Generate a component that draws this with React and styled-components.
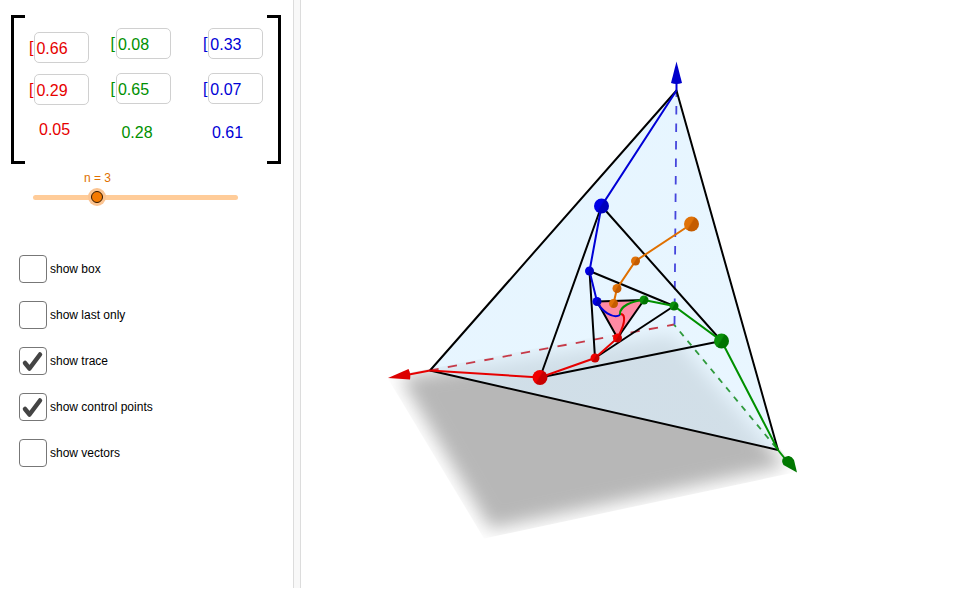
import React, { useState } from 'react';
import styled, { createGlobalStyle } from 'styled-components';

const RED = '#e60000';
const GREEN = '#009000';
const BLUE = '#0000d6';
const ORANGE = '#e07000';

const columns = [
    { name: 'red', color: RED, values: ['0.66', '0.29'], last: '0.05', top: 17, left: 15, gap: 11, lastGap: 16, indent: 10 },
    { name: 'green', color: GREEN, values: ['0.08', '0.65'], last: '0.28', top: 13, left: 21, gap: 14, lastGap: 20, indent: 11 },
    { name: 'blue', color: BLUE, values: ['0.33', '0.07'], last: '0.61', top: 13, left: 32, gap: 14, lastGap: 20, indent: 9 },
];

const options = [
    { id: 'box', label: 'show box', on: false },
    { id: 'last', label: 'show last only', on: false },
    { id: 'trace', label: 'show trace', on: true },
    { id: 'control', label: 'show control points', on: true },
    { id: 'vectors', label: 'show vectors', on: false },
];

const MatrixColumn = ({ column }) => {
    const [values, setValues] = useState(column.values);

    const handleChange = (index, value) => {
        setValues(values.map((v, i) => (i === index ? value : v)));
    }

    return (
        <Column $color={column.color} $top={column.top} $left={column.left} $gap={column.gap}>
            {values.map((value, i) => (
                <Entry key={i}>
                    [
                    <EntryInput
                        type="text"
                        aria-label={`${column.name} ${i + 1}`}
                        value={value}
                        onChange={(e) => handleChange(i, e.target.value)}
                    />
                </Entry>
            ))}
            <LastEntry $gap={column.lastGap - column.gap} $indent={column.indent}>{column.last}</LastEntry>
        </Column>
    );
}

const Ball = ({ x, y, r, kind }) => <circle cx={x} cy={y} r={r} fill={`url(#${kind})`} />;

const Scene = () => (
    <Canvas viewBox="301 0 659 588" role="img" aria-label="Nested triangles in 3D">
        <defs>
            <filter id="soft" x="-20%" y="-20%" width="140%" height="140%">
                <feGaussianBlur stdDeviation="9" />
            </filter>
            <clipPath id="floor">
                <path d="M387 377 L484 538.5 L799 471.5 L674 322 Z" />
            </clipPath>
            <linearGradient id="face" x1="0" y1="0" x2="1" y2="1">
                <stop offset="0" stopColor="#d9f0ff" />
                <stop offset="1" stopColor="#dff2ff" />
            </linearGradient>
            <linearGradient id="redBall" x1="0" y1="0" x2="1" y2="0.6">
                <stop offset="0.5" stopColor="#f00000" />
                <stop offset="0.6" stopColor="#c80000" />
            </linearGradient>
            <linearGradient id="greenBall" x1="0" y1="0" x2="1" y2="0.6">
                <stop offset="0.5" stopColor="#0a900a" />
                <stop offset="0.6" stopColor="#007400" />
            </linearGradient>
            <linearGradient id="blueBall" x1="0" y1="0" x2="1" y2="0.6">
                <stop offset="0.5" stopColor="#0000e6" />
                <stop offset="0.6" stopColor="#0000bc" />
            </linearGradient>
            <linearGradient id="orangeBall" x1="0" y1="0" x2="1" y2="0.6">
                <stop offset="0.5" stopColor="#e07208" />
                <stop offset="0.6" stopColor="#c45c00" />
            </linearGradient>
        </defs>

        {/* floor shadow */}
        <g clipPath="url(#floor)">
            <path d="M400 377 L490 529 L786 466 L672 335 Z" fill="#b7b7b7" filter="url(#soft)" />
        </g>

        {/* outer triangle */}
        <path d="M676.5 90.5 L430 370.5 L778 450 Z" fill="url(#face)" fillOpacity="0.68" />

        {/* hidden axes */}
        <g fill="none" strokeWidth="1.8">
            <path d="M674 324.5 L430 370.5" stroke="#c63a48" strokeDasharray="9.3 9.3" strokeDashoffset="2.3" />
            <path d="M674 324.5 L778 450" stroke="#2f9a3c" strokeDasharray="6 6.1" strokeDashoffset="3" />
            <path d="M674.5 324.5 L676.5 90.5" stroke="#4545dc" strokeDasharray="8.5 9" />
        </g>

        <path d="M597 301.5 L644 300 L617.5 338 Z" fill="#ff8aa4" />

        <g fill="none" stroke="#000" strokeWidth="2" strokeLinejoin="round">
            <path d="M676.5 90.5 L430 370.5 L778 450 Z" />
            <path d="M601.5 206 L540 377.5 L721.5 341 Z" />
            <path d="M589.5 271 L674 306 L595 358 Z" />
            <path d="M597 301.5 L644 300 L617.5 338 Z" />
        </g>

        {/* traces */}
        <g fill="none" strokeWidth="2">
            <path d="M430 370.5 L540 377.5 L595 358 L617.5 338 C621 331 625 324 624 318 C624 315 622 314 620 314" stroke={RED} />
            <path d="M778 450 L721.5 341 L674 306 L644 300 C632 301 619 306 620 315" stroke={GREEN} />
            <path d="M676.5 90.5 L601.5 206 L589.5 271 L597 301.5 C601 311 613 319 620 315" stroke={BLUE} />
            <path d="M691.5 224 L635.5 261 L617 288.5 L613.5 303.5" stroke={ORANGE} />
        </g>

        {/* axis tips */}
        <path d="M430 370.5 L409 374.5" stroke={RED} strokeWidth="2" />
        <path d="M388 378 L408.5 369 Q411 374 410 379.5 Z" fill="#dc0000" />
        <path d="M676.5 90.5 L676.5 82" stroke={BLUE} strokeWidth="2" />
        <path d="M676.5 61.5 L671 83 Q676.5 85 682 83 Z" fill="#0000cc" />
        <path d="M778 450 L786 460" stroke={GREEN} strokeWidth="2" />
        <path d="M797 472.5 L783.5 465 Q781 461 783 458.5 Q786 455.5 789 456 Q792 456.5 794 460 Z" fill="#007800" />

        <Ball x="601.5" y="206" r="7.5" kind="blueBall" />
        <Ball x="589.5" y="271" r="4.5" kind="blueBall" />
        <Ball x="597" y="301.5" r="4.5" kind="blueBall" />
        <Ball x="721.5" y="341" r="7.5" kind="greenBall" />
        <Ball x="674" y="306" r="4.5" kind="greenBall" />
        <Ball x="644" y="300" r="4.5" kind="greenBall" />
        <Ball x="540" y="377.5" r="7.5" kind="redBall" />
        <Ball x="595" y="358" r="4.5" kind="redBall" />
        <Ball x="617.5" y="338" r="4.5" kind="redBall" />
        <Ball x="691.5" y="224" r="7.5" kind="orangeBall" />
        <Ball x="635.5" y="261" r="4.5" kind="orangeBall" />
        <Ball x="617" y="288.5" r="4.5" kind="orangeBall" />
        <Ball x="613.5" y="303.5" r="4.5" kind="orangeBall" />
    </Canvas>
);

const App = () => {
    const [n, setN] = useState(3);
    const [checked, setChecked] = useState(
        Object.fromEntries(options.map((o) => [o.id, o.on]))
    );

    const toggle = (id) => {
        setChecked({ ...checked, [id]: !checked[id] });
    }

    return (<>
        <GlobalStyle />
        <Page>
            <Controls>
                <Matrix>
                    <Bracket />
                    {columns.map((column) => <MatrixColumn key={column.name} column={column} />)}
                    <Bracket $right />
                </Matrix>
                <SliderBlock>
                    <SliderLabel htmlFor="steps">n = {n}</SliderLabel>
                    <Slider
                        id="steps"
                        type="range"
                        min="0"
                        max="10"
                        value={n}
                        onChange={(e) => setN(Number(e.target.value))}
                    />
                </SliderBlock>
                <Options>
                    {options.map((o) => (
                        <Option key={o.id}>
                            <Box
                                type="checkbox"
                                checked={checked[o.id]}
                                onChange={() => toggle(o.id)}
                            />
                            {checked[o.id] && (
                                <Tick viewBox="0 0 28 28">
                                    <path d="M6 16 L10.5 21.5 L21 7.5" />
                                </Tick>
                            )}
                            {o.label}
                        </Option>
                    ))}
                </Options>
            </Controls>
            <Divider />
            <View>
                <Scene />
            </View>
        </Page>
    </>)
}

const GlobalStyle = createGlobalStyle`
  * {
      box-sizing: border-box;
  }
  body {
      margin: 0;
      background: #fff;
      font-family: 'Liberation Sans', Arial, sans-serif;
  }
`

const Page = styled.main`
    display: flex;
    align-items: stretch;
`

const Controls = styled.section`
    flex: 0 0 293px;
    padding: 15px 12px 0 11px;
`

const Divider = styled.div`
    flex: 0 0 8px;
    background: #f8f8f8;
    border-left: 1px solid #dcdcdc;
    border-right: 1px solid #dcdcdc;
`

const View = styled.section`
    flex: 1;
    min-width: 0;
`

const Canvas = styled.svg`
    display: block;
    width: 100%;
`

const Matrix = styled.div`
    display: flex;
    min-height: 149px;
`

const Bracket = styled.div`
    width: 14px;
    margin-left: ${(props) => (props.$right ? 'auto' : '0')};
    margin-right: ${(props) => (props.$right ? '0' : '-11px')};
    border: 3px solid #000;
    border-left-width: ${(props) => (props.$right ? '0' : '3px')};
    border-right-width: ${(props) => (props.$right ? '3px' : '0')};
`

const Column = styled.div`
    display: flex;
    flex-direction: column;
    gap: ${(props) => props.$gap}px;
    padding-top: ${(props) => props.$top}px;
    padding-left: ${(props) => props.$left}px;
    color: ${(props) => props.$color};
    font-size: 16px;
    line-height: 18px;
`

const Entry = styled.label`
    display: flex;
    align-items: center;
`

const EntryInput = styled.input`
    width: 55px;
    height: 31px;
    margin-left: 1px;
    padding: 2px 1px 0;
    border: 1px solid #d0d0d0;
    border-radius: 5px;
    background: #fff;
    color: inherit;
    font: inherit;
`

const LastEntry = styled.output`
    padding-top: ${(props) => props.$gap}px;
    padding-left: ${(props) => props.$indent}px;
`

const SliderBlock = styled.div`
    display: flex;
    flex-direction: column;
    padding: 7px 43px 0 22px;
`

const SliderLabel = styled.label`
    padding-left: 51px;
    color: ${ORANGE};
    font-size: 12px;
    line-height: 14px;
`

const Slider = styled.input`
    appearance: none;
    width: 100%;
    height: 18px;
    margin: 3px 0 0;
    background: transparent;

    &::-webkit-slider-runnable-track {
        height: 5px;
        border-radius: 3px;
        background: #ffcc99;
    }

    &::-webkit-slider-thumb {
        appearance: none;
        width: 12px;
        height: 12px;
        margin-top: -4px;
        border: 1px solid #301800;
        border-radius: 50%;
        background: #f57a00;
        box-shadow: 0 0 0 3px #fbc492;
    }
`

const Options = styled.div`
    display: flex;
    flex-direction: column;
    align-items: flex-start;
    gap: 18px;
    padding: 49px 0 0 8px;
`

const Option = styled.label`
    display: grid;
    grid-template-columns: 28px auto;
    align-items: center;
    column-gap: 3px;
    font-size: 12px;
    line-height: 28px;
    color: #000;
`

const Box = styled.input`
    grid-area: 1 / 1;
    appearance: none;
    width: 28px;
    height: 28px;
    margin: 0;
    border: 1px solid #777;
    border-radius: 4px;
    background: #fff;
`

const Tick = styled.svg`
    grid-area: 1 / 1;
    width: 28px;
    height: 28px;
    fill: none;
    stroke: #444;
    stroke-width: 4.5;
    stroke-linecap: round;
    stroke-linejoin: round;
    pointer-events: none;
`

export default App;
